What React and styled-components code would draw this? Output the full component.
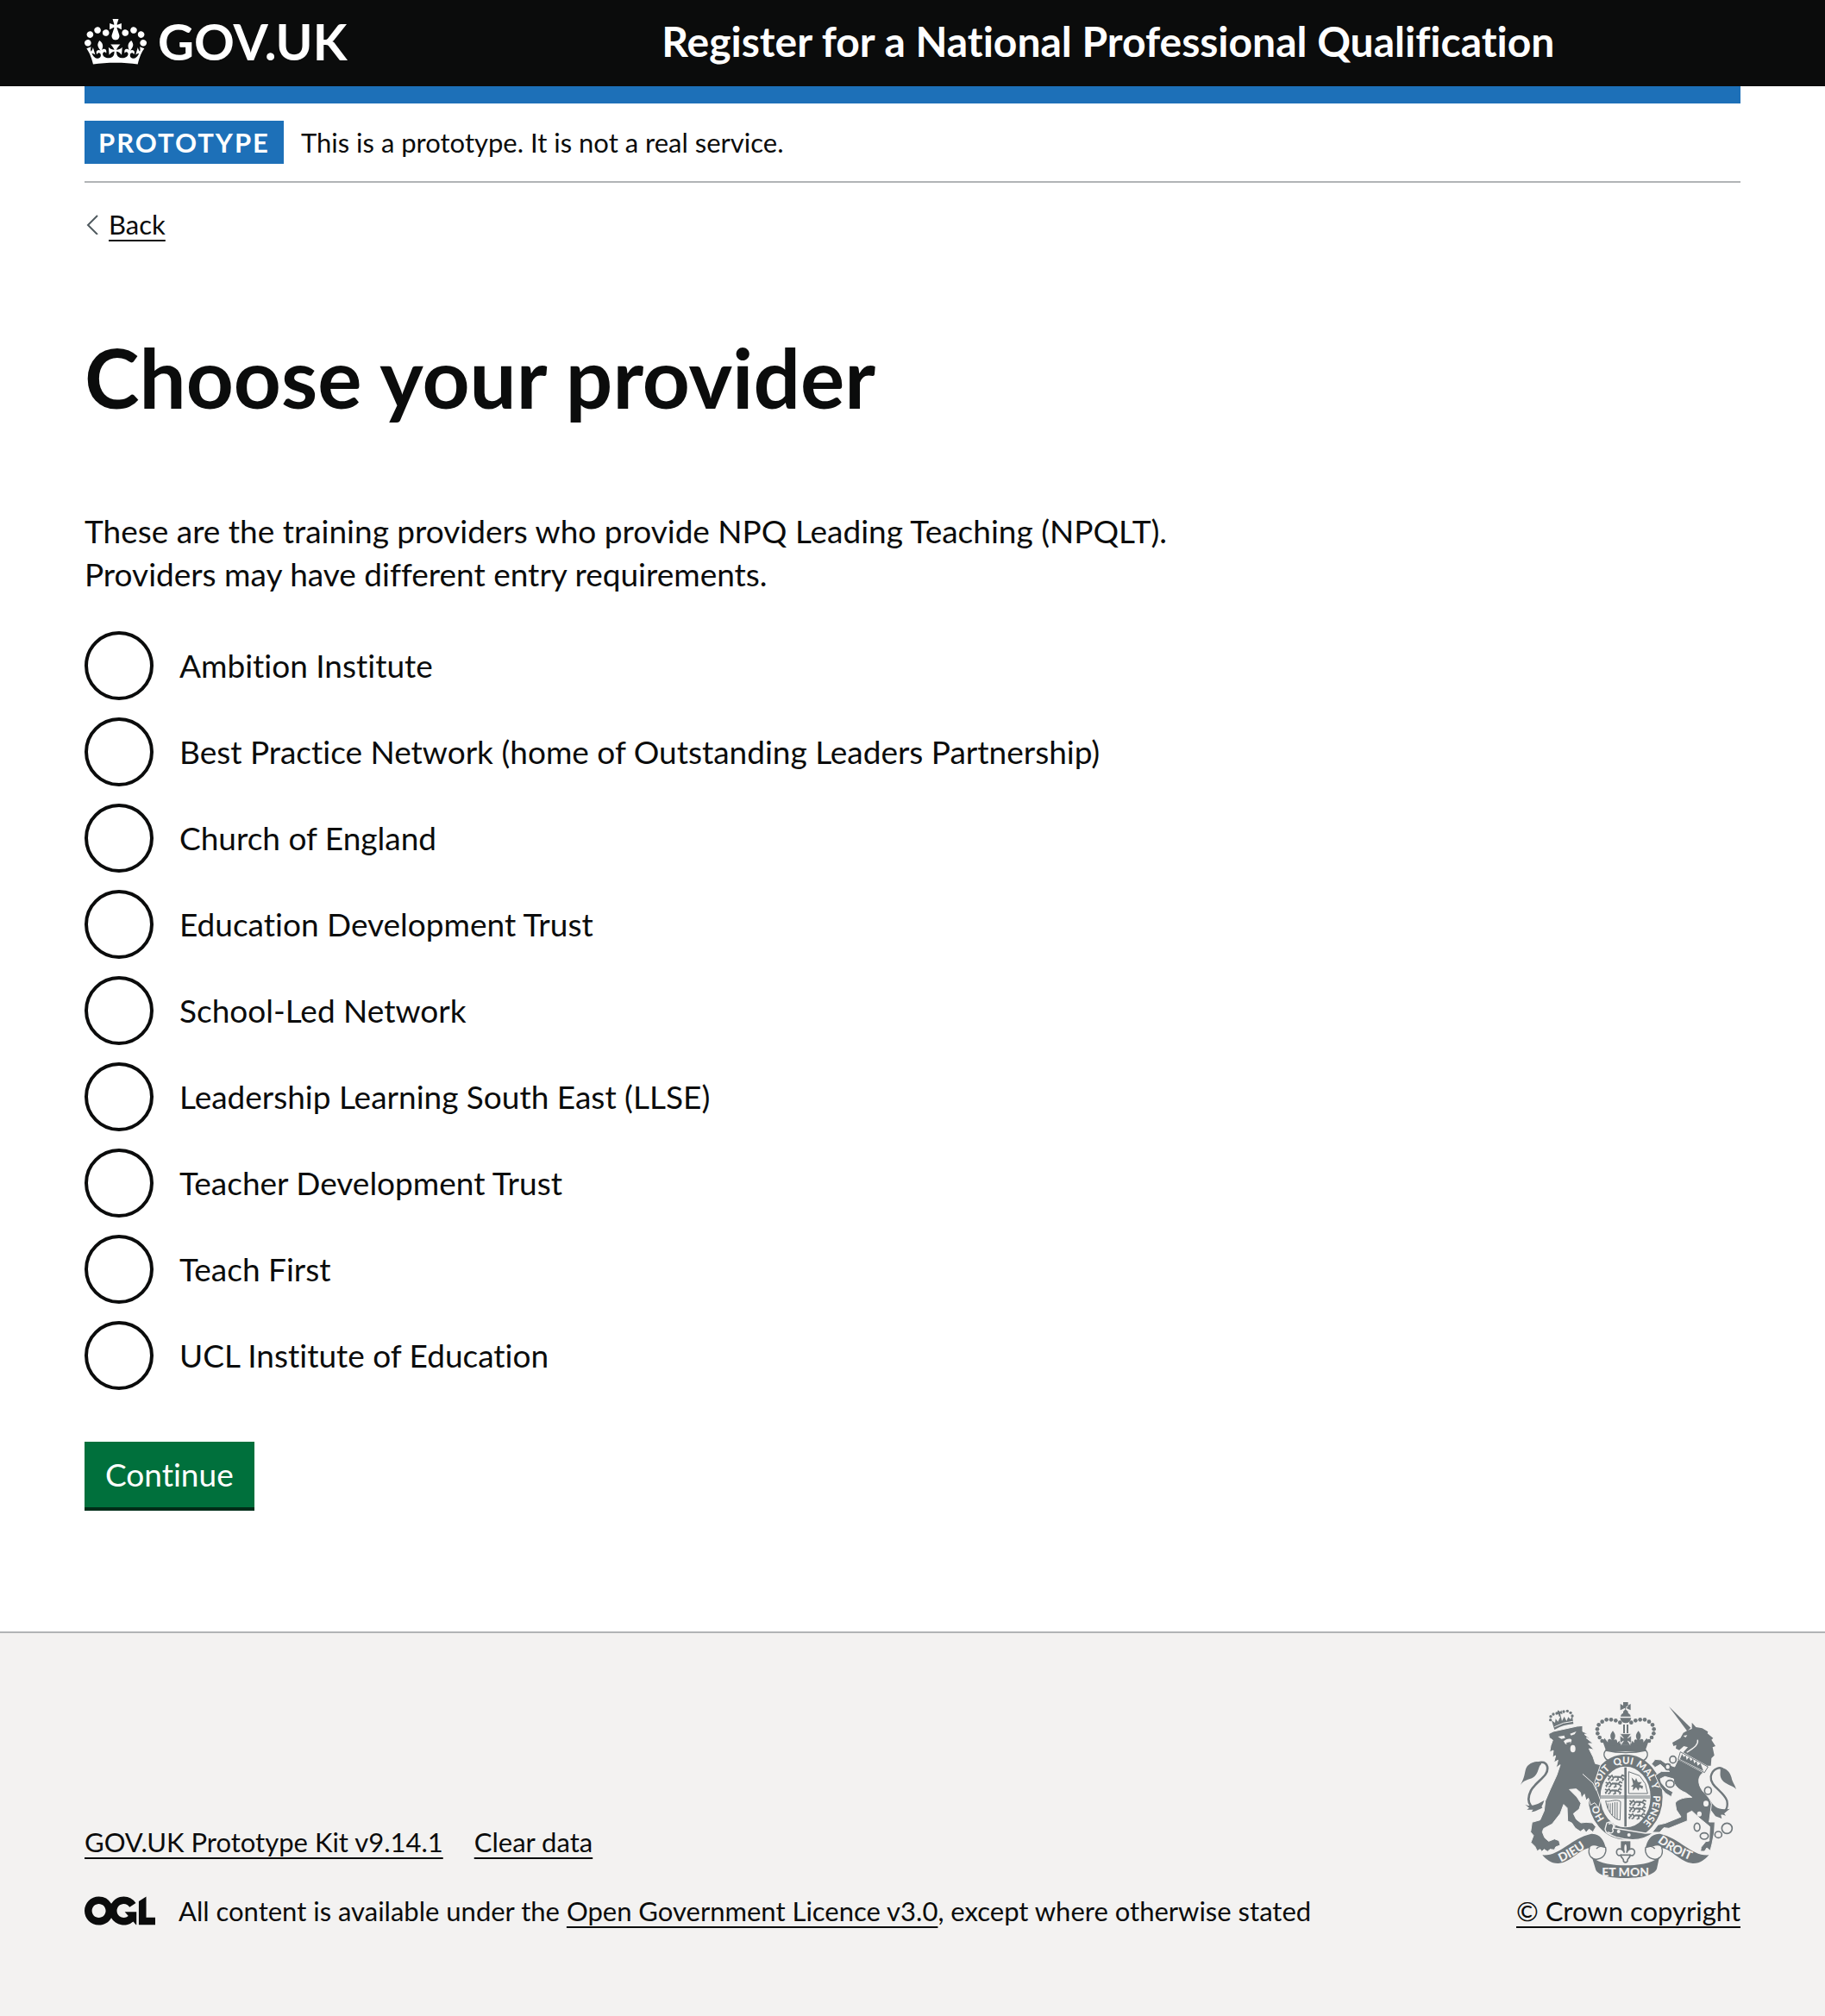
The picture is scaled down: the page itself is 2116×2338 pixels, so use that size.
import React, { useState } from "react";
import styled, { createGlobalStyle, css } from "styled-components";

const color = {
  ink: "#0b0c0c",
  white: "#ffffff",
  blue: "#1d70b8",
  green: "#00703c",
  greenShade: "#002d18",
  border: "#b1b4b6",
  canvas: "#f3f2f1",
  muted: "#505a5f",
  crest: "#6f777b",
};

const GlobalStyle = createGlobalStyle`
  *, *::before, *::after { box-sizing: border-box; }
  body {
    margin: 0;
    background: ${color.canvas};
    color: ${color.ink};
    font-family: Lato, "Liberation Sans", Arial, sans-serif;
    font-variant-ligatures: none;
  }
`;

const smallText = css`
  font-size: 31px;
  line-height: 40px;
`;

const bodyText = css`
  font-size: 37px;
  line-height: 50px;
`;

const Page = styled.div`
  background: ${color.white};
`;

const Container = styled.div`
  margin: 0 98px;
`;

const Header = styled.header`
  background: ${color.ink};
  color: ${color.white};
`;

const HeaderRow = styled(Container)`
  display: grid;
  grid-template-columns: 1fr 2fr;
  column-gap: 44px;
  align-items: center;
  min-height: 100px;
  padding-bottom: 4px;
`;

const Logo = styled.a`
  display: flex;
  align-items: center;
  gap: 13px;
  color: inherit;
  font-size: 58px;
  font-weight: 700;
  line-height: 60px;
  text-decoration: none;
`;

const ServiceName = styled.a`
  color: inherit;
  font-size: 48px;
  font-weight: 700;
  line-height: 60px;
  text-decoration: none;
`;

const BlueBar = styled.div`
  height: 20px;
  background: ${color.blue};
`;

const PhaseBanner = styled.div`
  display: flex;
  align-items: center;
  gap: 20px;
  padding: 20px 0;
  border-bottom: 2px solid ${color.border};
  ${smallText}
`;

const Tag = styled.strong`
  padding: 5px 16px;
  background: ${color.blue};
  color: ${color.white};
  letter-spacing: 2px;
`;

const Link = styled.a`
  color: inherit;
  text-decoration: underline;
  text-decoration-thickness: 2px;
  text-underline-offset: 6px;
  text-decoration-skip-ink: none;
`;

const BackLink = styled.a`
  display: inline-flex;
  align-items: center;
  gap: 12px;
  margin-top: 28px;
  color: inherit;
  text-decoration: none;
  ${smallText}

  span {
    text-decoration: underline;
    text-decoration-thickness: 2px;
    text-underline-offset: 6px;
  }
`;

const Main = styled.main`
  padding: 107px 0 140px;
`;

const Column = styled.form`
  width: 66.66%;
`;

const Title = styled.h1`
  margin: 0 0 104px;
  font-size: 96px;
  font-weight: 700;
  line-height: 100px;
`;

const Intro = styled.p`
  margin: 0 0 41px;
  ${bodyText}
`;

const Options = styled.div`
  display: flex;
  flex-direction: column;
  gap: 20px;
  margin-bottom: 60px;
`;

const Option = styled.label`
  display: flex;
  align-items: center;
  gap: 30px;
  cursor: pointer;
  ${bodyText}
`;

const Radio = styled.input`
  appearance: none;
  flex: none;
  width: 80px;
  height: 80px;
  margin: 0;
  border: 4px solid ${color.ink};
  border-radius: 50%;
  background: ${color.white};
  cursor: pointer;

  &:checked {
    background: radial-gradient(circle, ${color.ink} 20px, ${color.white} 21px);
  }
`;

const Button = styled.button`
  display: block;
  margin: 0 0 4px;
  padding: 13px 24px;
  border: 0;
  background: ${color.green};
  box-shadow: 0 4px 0 ${color.greenShade};
  color: ${color.white};
  font-family: inherit;
  font-variant-ligatures: none;
  cursor: pointer;
  ${bodyText}
`;

const Footer = styled.footer`
  border-top: 2px solid ${color.border};
  background: ${color.canvas};
  ${smallText}
`;

const FooterRow = styled(Container)`
  display: flex;
  align-items: flex-end;
  justify-content: space-between;
  gap: 40px;
  padding: 80px 0 102px;
`;

const FooterMeta = styled.div`
  display: flex;
  flex-direction: column;
  gap: 40px;
`;

const FooterLinks = styled.nav`
  display: flex;
  gap: 36px;
`;

const Licence = styled.div`
  display: flex;
  align-items: center;
  gap: 27px;

  svg {
    flex: none;
  }
`;

const Copyright = styled.div`
  display: flex;
  flex: none;
  flex-direction: column;
  align-items: center;
  gap: 18px;
`;

function Crown() {
  return (
    <svg width="72" height="53" viewBox="0 0 132 97" fill="currentColor" aria-hidden="true">
      <path d="M25 30.2c3.5 1.5 7.7-.2 9.1-3.7 1.5-3.6-.2-7.8-3.9-9.2-3.6-1.4-7.6.3-9.1 3.9-1.4 3.5.3 7.5 3.9 9zM9 39.5c3.6 1.5 7.8-.2 9.2-3.7 1.5-3.6-.2-7.8-3.9-9.1-3.6-1.5-7.6.2-9.1 3.8-1.4 3.5.3 7.5 3.8 9zM4.4 57.2c3.5 1.5 7.7-.2 9.1-3.8 1.5-3.6-.2-7.7-3.9-9.1-3.5-1.5-7.6.3-9.1 3.8-1.4 3.5.3 7.6 3.9 9.1zm38.3-21.4c3.5 1.5 7.7-.2 9.1-3.8 1.5-3.6-.2-7.7-3.9-9.1-3.6-1.5-7.6.3-9.1 3.8-1.3 3.6.4 7.7 3.9 9.1zm64.4-5.6c-3.6 1.5-7.8-.2-9.1-3.7-1.5-3.6.2-7.8 3.8-9.2 3.6-1.4 7.7.3 9.2 3.9 1.3 3.5-.4 7.5-3.9 9zm15.9 9.3c-3.6 1.5-7.7-.2-9.1-3.7-1.5-3.6.2-7.8 3.7-9.1 3.6-1.5 7.7.2 9.2 3.8 1.5 3.5-.3 7.5-3.8 9zm4.7 17.7c-3.6 1.5-7.8-.2-9.2-3.8-1.5-3.6.2-7.7 3.9-9.1 3.6-1.5 7.7.3 9.2 3.8 1.3 3.5-.4 7.6-3.9 9.1zM89.3 35.8c-3.6 1.5-7.8-.2-9.2-3.8-1.4-3.6.2-7.7 3.9-9.1 3.6-1.5 7.7.3 9.2 3.8 1.4 3.6-.3 7.7-3.9 9.1zM69.7 17.7l8.9 4.7V9.3l-8.9 2.8c-.2-.3-.5-.6-.9-.9L72.4 0H59.6l3.5 11.2c-.3.3-.6.5-.9.9l-8.8-2.8v13.1l8.8-4.7c.3.3.6.7.9.9l-5 15.4v.1c-.2.8-.4 1.6-.4 2.4 0 4.1 3.1 7.5 7 8.1h.2c.3 0 .7.1 1 .1.4 0 .7 0 1-.1h.2c4-.6 7.1-4.1 7.1-8.1 0-.8-.1-1.7-.4-2.4V34l-5.1-15.4c.4-.2.7-.6 1-.9zM66 92.8c16.9 0 32.8 1.1 47.1 3.2 4-16.9 8.9-26.7 14-33.5l-9.6-3.4c1 4.9 1.1 7.2 0 10.2-1.5-1.4-3-4.3-4.2-8.7L108.6 76c2.8-2 5-3.2 7.5-3.3-4.4 9.4-10 11.9-13.6 11.2-4.3-.8-6.3-4.6-5.6-7.9 1-4.7 5.7-5.9 8-.5 4.3-8.7-3-11.4-7.6-8.8 7.1-7.2 7.9-13.5 2.1-21.1-8 6.1-8.1 12.3-4.5 20.8-4.7-5.4-12.1-2.5-9.5 6.2 3.4-5.2 7.9-2 7.2 3.1-.6 4.3-6.4 7.8-13.5 7.2-10.3-.9-10.9-8-11.2-13.8 2.5-.5 7.1 1.8 11 7.3L80.2 60c-4.1 4.4-8 5.3-12.3 5.4 1.4-4.4 8-11.6 8-11.6H55.5s6.4 7.2 7.9 11.6c-4.2-.1-8-1-12.3-5.4l1.4 16.4c3.9-5.5 8.5-7.7 10.9-7.3-.3 5.8-.9 12.8-11.1 13.8-7.2.6-12.9-2.9-13.5-7.2-.7-5 3.8-8.3 7.1-3.1 2.7-8.7-4.6-11.6-9.4-6.2 3.7-8.5 3.6-14.7-4.6-20.8-5.8 7.6-5 13.9 2.2 21.1-4.7-2.6-11.9.1-7.7 8.8 2.3-5.5 7.1-4.2 8.1.5.7 3.3-1.3 7.1-5.7 7.9-3.5.7-9-1.8-13.5-11.2 2.5.1 4.7 1.3 7.5 3.3l-4.7-15.4c-1.2 4.4-2.7 7.2-4.3 8.7-1.1-3-.9-5.3 0-10.2l-9.5 3.4c5 6.9 9.9 16.7 14 33.5 14.8-2.1 30.8-3.2 47.7-3.2z" />
    </svg>
  );
}

function Chevron() {
  return (
    <svg width="16" height="24" viewBox="0 0 16 24" fill="none" stroke={color.muted} strokeWidth="2" aria-hidden="true">
      <path d="M15 2 4 13l11 11" />
    </svg>
  );
}

function OglLogo() {
  return (
    <svg width="82" height="34" viewBox="0 0 483.2 195.7" fill="currentColor" role="img" aria-label="Open Government Licence">
      <path d="M421.5 142.8V.1l-50.7 32.3v161.1h112.4v-50.7zm-122.3-9.6A47.12 47.12 0 0 1 221 97.8c0-26 21.1-47.1 47.1-47.1 16.7 0 31.4 8.7 39.7 21.8l42.7-27.2A97.63 97.63 0 0 0 268.1 0c-36.5 0-68.3 20.1-85.1 49.7A98 98 0 0 0 97.8 0C43.9 0 0 43.9 0 97.8s43.9 97.8 97.8 97.8c36.5 0 68.3-20.1 85.1-49.7a97.76 97.76 0 0 0 149.6 25.4l19.4 22.2h3v-87.8h-80l24.3 27.5zM97.8 145c-26 0-47.1-21.1-47.1-47.1s21.1-47.1 47.1-47.1 47.1 21.1 47.1 47.1S123.8 145 97.8 145" />
    </svg>
  );
}

const crownBeads = [
  [412, 113], [397, 106], [381, 103], [365, 103], [350, 110], [338, 121], [333, 136], [334, 151], [341, 165], [350, 177],
];

function HalfCrown() {
  return (
    <g>
      {crownBeads.map(([x, y]) => (
        <circle key={`${x}-${y}`} cx={x} cy={y} r="7" />
      ))}
      <path d="M387 142c-12 14-9 22-4 32-8-8-16-2-13 8l-12-15-6 12 12 34h68v-17c-12-2-19-9-22-20l-8 8c2-10-4-16-11-10 5-10 8-18-4-32z" />
    </g>
  );
}

function Lion() {
  return (
    <g transform="translate(54 54)">
      <path d="M86 352C56 372 26 340 48 296C66 262 112 246 105 212C98 190 74 196 62 208" fill="none" stroke={color.crest} strokeWidth="8" />
      <path d="M84 198C62 190 46 200 36 210C24 226 32 240 12 276C28 252 52 262 66 240C76 226 74 212 84 204ZM28 344C40 350 60 352 94 330C88 352 76 368 50 370L56 362L34 362L42 356Z" />
      <path
        stroke={color.canvas}
        strokeWidth="3"
        d="M126 90L110 98L112 112L124 120L117 140L113 162L126 156L123 180L134 174L128 198L142 190L136 216L150 206L138 242L116 290L98 332L94 366L80 398L52 406L47 440L57 452L48 476L62 490L70 506L80 500L86 508L94 500L106 508L114 500L130 502L134 492L150 486L146 470L130 464L110 472L96 460L88 440L92 428L122 412L150 376L162 344L174 356L176 402L190 408L202 426L220 438L232 430L240 442L250 430L264 440L274 422L262 408L240 406L222 408L206 396L196 376L216 360L222 340L208 318L182 292L206 290L220 302L224 322L234 308L240 330L248 322L256 346L270 338L284 356L290 330L278 296L270 266L290 206L272 202L264 178L250 150L268 154L248 132L264 132L240 112L254 116L234 100L246 98L228 90L228 70L208 72Z"
      />
      <path d="M228 238L264 270L276 296" fill="none" stroke={color.canvas} strokeWidth="3" />
      <g fill={color.canvas}>
        <path d="M142 108L164 104L167 113L154 116ZM184 98L206 90L200 100L188 104ZM162 124C170 116 186 112 190 120L186 132L168 134Z" />
        <ellipse cx="194" cy="150" rx="9" ry="13" />
        <path d="M170 130L186 126L182 142Z" fill={color.crest} />
      </g>
      <path d="M120 52L130 84Q160 66 196 64L192 36L186 48L178 40L172 54L164 38L156 54L152 36L142 56L134 46L132 60Z" />
      <g>
        {[[116, 50], [117, 38], [126, 30], [138, 27], [162, 21], [175, 19], [186, 25], [192, 36]].map(([x, y]) => (
          <circle key={`${x}-${y}`} cx={x} cy={y} r="5" />
        ))}
      </g>
      <path d="M142 16L150 22L154 16L158 30L150 28L152 38L146 38L144 30L138 30Z" />
      <path d="M130 74Q160 57 194 55" fill="none" stroke={color.canvas} strokeWidth="3" />
    </g>
  );
}

function Unicorn() {
  return (
    <g transform="translate(510 45)">
      <path d="M236 384C262 392 280 370 274 340C262 306 214 290 218 256C224 226 252 220 262 232" fill="none" stroke={color.crest} strokeWidth="7" />
      <path d="M250 226C272 226 284 240 290 260C292 274 300 280 306 300C292 284 270 286 256 266C246 250 254 240 250 226ZM214 334C228 366 250 374 284 368L264 384L270 392L252 386L256 402L234 394L218 372Z" />
      <path d="M72 12L148 86L136 98Z" />
      <path d="M136 96L122 104L112 122L84 138L88 150L98 146L96 158L108 164L124 150L138 154L122 172L206 218L218 218L220 192L230 182L224 154L234 150L220 128L226 122L206 106L208 100L188 88L166 84L152 68L152 90Z" />
      <path d="M172 128C176 150 150 160 134 172" fill="none" stroke={color.canvas} strokeWidth="4" />
      <path d="M122 114L136 112L130 120Z" fill={color.canvas} />
      <path
        stroke={color.canvas}
        strokeWidth="3"
        d="M104 196L192 242C176 252 170 272 184 298C192 314 216 326 220 352L216 384L212 414L232 414L230 450L222 490L216 514L204 504L196 516L182 516L184 502L200 482L212 480L214 430L180 402L152 376L136 384L136 410L72 436L54 434L40 450L14 450L34 424L60 418L114 396L98 372L94 348C104 332 130 328 152 328L130 312C108 304 86 284 88 264L58 256L42 264L46 278L62 296L86 310L80 326L60 314L42 292L24 252L46 238L74 238L62 232L42 214L24 224L12 212L24 196L44 198L64 212L92 222Z"
      />
      <path d="M112 170L208 222L196 242L104 196Z" fill={color.canvas} stroke={color.crest} strokeWidth="3" />
      <path d="M110 196L118 178L124 188L130 182L134 198L142 188L148 202L156 194L160 210L168 202L172 218L182 210L192 236Z" />
      <g fill={color.canvas} stroke={color.crest} strokeWidth="5">
        <ellipse cx="86" cy="197" rx="11" ry="12" />
        <ellipse cx="68" cy="222" rx="9" ry="10" />
        <ellipse cx="76" cy="281" rx="14" ry="12" />
        <ellipse cx="208" cy="305" rx="12" ry="13" />
        <ellipse cx="170" cy="432" rx="10" ry="14" />
        <ellipse cx="195" cy="463" rx="14" ry="11" />
        <ellipse cx="244" cy="458" rx="12" ry="11" />
        <circle cx="274" cy="436" r="18" />
      </g>
      <ellipse cx="201" cy="350" rx="9" ry="10" fill={color.canvas} />
      <ellipse cx="178" cy="386" rx="8" ry="9" fill={color.canvas} />
    </g>
  );
}

function PassantLion({ x, y }) {
  return (
    <path
      transform={`translate(${x} ${y})`}
      fill="none"
      stroke={color.crest}
      strokeWidth="5"
      d="M2 4l8 4 6-5 4 7 12-2 14 2 6-8 8 4M12 9l-8 6 2 5M22 10l-4 8-6 2M36 10l2 8-8 3M46 10l10 6-4 6M24 7l20 1"
    />
  );
}

function Arms() {
  return (
    <g>
      <ellipse cx="431" cy="372" rx="108" ry="127" fill={color.canvas} stroke={color.crest} strokeWidth="42" />
      <path d="M431 269V475" stroke={color.crest} strokeWidth="8" />
      <path d="M345 369H517M345 375H517" stroke={color.crest} strokeWidth="3" />
      <PassantLion x="368" y="294" />
      <PassantLion x="360" y="317" />
      <PassantLion x="358" y="341" />
      <PassantLion x="443" y="381" />
      <PassantLion x="442" y="404" />
      <PassantLion x="440" y="428" />
      <path d="M442 284V360H508L500 326L480 298Z" fill="none" stroke={color.crest} strokeWidth="3" />
      <path d="M452 304l12 12 4-10 6 14 14 0-8 10 12 4-2 10-10-6-4 12-8-12-12 12 2-14-8 0 8-8z" />
      <path d="M362 386C374 392 396 376 414 388L412 452C396 452 370 430 362 386M370 394V412M378 394V426M386 392V436M394 390V444M402 390V450" fill="none" stroke={color.crest} strokeWidth="3" />
      <g fill={color.canvas} fontSize="34" fontWeight="900" textAnchor="middle">
        <text><textPath href="#garter" startOffset="112">HO</textPath></text>
        <text><textPath href="#garter" startOffset="238">SOIT</textPath></text>
        <text><textPath href="#garter" startOffset="326">QUI</textPath></text>
        <text><textPath href="#garter" startOffset="406">MAL</textPath></text>
        <text><textPath href="#garter" startOffset="463">Y</textPath></text>
        <text><textPath href="#garter" startOffset="547">PENSE</textPath></text>
      </g>
      <path d="M366 462C392 452 398 470 390 480L500 498L530 496C500 520 460 530 400 512C380 504 362 500 360 484Z" stroke={color.canvas} strokeWidth="4" />
      <path d="M372 466C388 458 394 472 386 484C392 494 382 502 370 494" fill="none" stroke={color.canvas} strokeWidth="4" />
      <circle cx="407" cy="492" r="6" fill={color.canvas} />
      <circle cx="443" cy="504" r="6" fill={color.canvas} />
    </g>
  );
}

function RibbonFold() {
  return (
    <g>
      <path d="M306 548C298 574 314 592 334 588C356 584 366 566 362 548C350 540 336 544 330 552" fill={color.canvas} stroke={color.crest} strokeWidth="4" />
      <path d="M142 574C204 578 240 516 312 500C342 498 358 524 362 550L336 544C318 538 310 542 306 550C272 552 242 600 198 603C172 604 156 590 142 574Z" />
    </g>
  );
}

function Crest() {
  return (
    <svg width="250" height="204" viewBox="66 42 750 612" fill={color.crest} fontFamily="Lato, sans-serif" aria-hidden="true">
      <defs>
        <path id="garter" d="M431 487A97 115 0 0 1 431 257A97 115 0 0 1 431 487" />
        <path id="dieu" d="M206 599Q262 574 314 532" />
        <path id="droit" d="M542 528Q600 574 686 602" />
      </defs>

      <path d="M431 66l-8-10v-14h17v14zM431 66l-8 9v12h17v-12zM431 61l-9 5-9 4V48l9 5zM431 61l9 5 9 4V48l-9 5z" />
      <path d="M414 92a17 13 0 0 1 35 0z" />
      <path d="M412 97h39c-3 12-9 18-19 18s-17-6-20-18z" />
      <path d="M423 120h6v30h-6zM435 120h6v30h-6z" />
      <HalfCrown />
      <g transform="translate(863 0) scale(-1 1)">
        <HalfCrown />
      </g>
      <path d="M412 152h39l-12 15 12-8v26l-12-8 10 16h-35l10-16-12 8v-26l12 8z" stroke={color.canvas} strokeWidth="2" />
      <path d="M362 210C352 222 356 238 372 246C410 224 454 224 492 246C508 238 512 222 502 210C460 220 404 220 362 210Z" fill={color.canvas} stroke={color.crest} strokeWidth="4" />
      <path d="M364 196C400 190 462 190 500 196L502 210C460 204 404 204 362 210Z" />

      <Arms />

      <path d="M415 526h33v34h-33z" />
      <path d="M431 530C420 544 424 556 427 566C420 548 400 548 400 564C400 574 408 578 414 574C416 584 424 586 424 592C422 602 440 602 438 592C438 586 446 584 448 574C454 578 463 574 463 564C463 548 442 548 435 566C438 556 442 544 431 530Z" fill={color.canvas} stroke={color.crest} strokeWidth="5" />
      <path d="M414 574h34" stroke={color.crest} strokeWidth="5" />

      <RibbonFold />
      <g transform="translate(863 0) scale(-1 1)">
        <RibbonFold />
      </g>
      <path d="M314 580C340 606 392 610 431 610C470 610 522 606 549 580L540 622C530 646 480 654 431 654C382 654 338 646 328 626Z" />
      <Lion />
      <Unicorn />

      <g fill={color.canvas} fontSize="42" fontWeight="900">
        <text><textPath href="#dieu">DIEU</textPath></text>
        <text><textPath href="#droit">DROIT</textPath></text>
        <text x="431" y="647" textAnchor="middle">ET MON</text>
      </g>
    </svg>
  );
}

const providers = [
  "Ambition Institute",
  "Best Practice Network (home of Outstanding Leaders Partnership)",
  "Church of England",
  "Education Development Trust",
  "School-Led Network",
  "Leadership Learning South East (LLSE)",
  "Teacher Development Trust",
  "Teach First",
  "UCL Institute of Education",
];

export default function App() {
  const [provider, setProvider] = useState("");

  return (
    <Page>
      <GlobalStyle />
      <Header>
        <HeaderRow>
          <Logo href="#home">
            <Crown />
            <span>GOV.UK</span>
          </Logo>
          <ServiceName href="#service">Register for a National Professional Qualification</ServiceName>
        </HeaderRow>
      </Header>

      <Container>
        <BlueBar />
        <PhaseBanner>
          <Tag>PROTOTYPE</Tag>
          <span>This is a prototype. It is not a real service.</span>
        </PhaseBanner>
        <BackLink href="#back">
          <Chevron />
          <span>Back</span>
        </BackLink>

        <Main>
          <Column onSubmit={(event) => event.preventDefault()}>
            <Title id="title">Choose your provider</Title>
            <Intro>
              These are the training providers who provide NPQ Leading Teaching (NPQLT). Providers may have different
              entry requirements.
            </Intro>
            <Options role="radiogroup" aria-labelledby="title">
              {providers.map((name, index) => (
                <Option key={name} htmlFor={`provider-${index}`}>
                  <Radio
                    type="radio"
                    id={`provider-${index}`}
                    name="provider"
                    value={name}
                    checked={provider === name}
                    onChange={() => setProvider(name)}
                  />
                  <span>{name}</span>
                </Option>
              ))}
            </Options>
            <Button type="submit">Continue</Button>
          </Column>
        </Main>
      </Container>

      <Footer>
        <FooterRow>
          <FooterMeta>
            <FooterLinks aria-label="Support links">
              <Link href="#kit">GOV.UK Prototype Kit v9.14.1</Link>
              <Link href="#clear">Clear data</Link>
            </FooterLinks>
            <Licence>
              <OglLogo />
              <span>
                All content is available under the <Link href="#licence">Open Government Licence v3.0</Link>, except
                where otherwise stated
              </span>
            </Licence>
          </FooterMeta>
          <Copyright>
            <Crest />
            <Link href="#copyright">© Crown copyright</Link>
          </Copyright>
        </FooterRow>
      </Footer>
    </Page>
  );
}
